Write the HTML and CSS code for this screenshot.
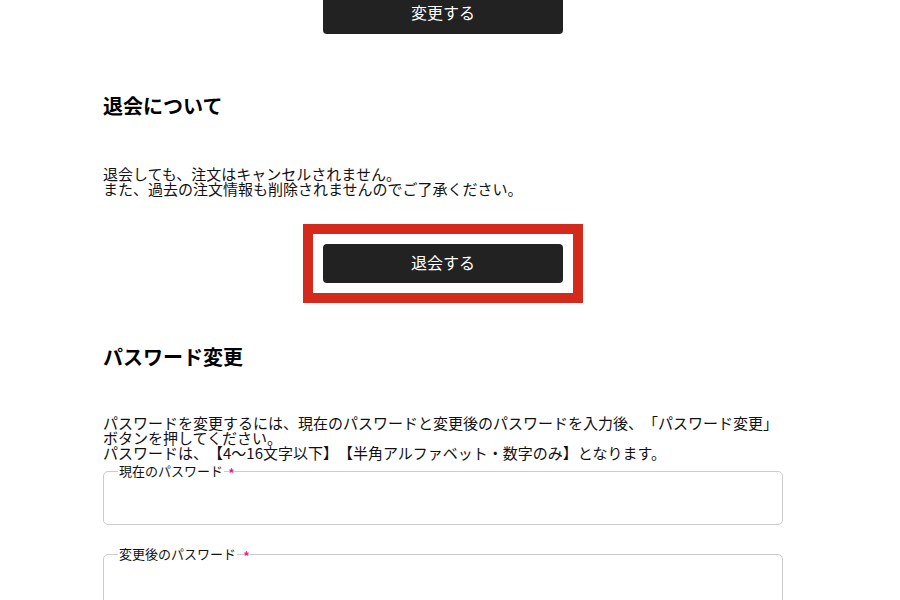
FILE: index.html
```html
<!DOCTYPE html>
<html lang="ja">
<head>
<meta charset="utf-8">
<link rel="stylesheet" href="styles.css">
</head>
<body>
<div class="page">
  <div class="btn-row top-row">
    <button class="btn">変更する</button>
  </div>

  <h2 class="heading withdraw-heading">退会について</h2>
  <p class="text withdraw-text">退会しても、注文はキャンセルされません。<br>また、過去の注文情報も削除されませんのでご了承ください。</p>

  <div class="btn-row">
    <div class="highlight">
      <button class="btn">退会する</button>
    </div>
  </div>

  <h2 class="heading password-heading">パスワード変更</h2>
  <p class="text password-text">パスワードを変更するには、現在のパスワードと変更後のパスワードを入力後、「パスワード変更」ボタンを押してください。<br>パスワードは、【4～16文字以下】【半角アルファベット・数字のみ】となります。</p>

  <fieldset class="field first-field">
    <legend class="field-label">現在のパスワード</legend>
    <span class="req req-1">*</span>
    <input class="field-input" type="password">
  </fieldset>

  <fieldset class="field second-field">
    <legend class="field-label">変更後のパスワード</legend>
    <span class="req req-2">*</span>
    <input class="field-input" type="password">
  </fieldset>
</div>
</body>
</html>
```

FILE: styles.css
```css
html, body {
  margin: 0;
  padding: 0;
  background: #fff;
}
body {
  font-family: "Noto Sans CJK JP", "Noto Sans", sans-serif;
  color: #111;
  overflow: hidden;
  text-spacing-trim: space-all;
}
.page {
  width: 680px;
  margin-left: 103px;
}
.btn-row {
  display: flex;
  justify-content: center;
}
.top-row {
  margin-top: -6px;
}
.btn {
  width: 240px;
  height: 39px;
  border: 0;
  border-radius: 4px;
  background: #222;
  color: #fff;
  font-family: "Noto Sans CJK JP", sans-serif;
  font-size: 16px;
  line-height: 36px;
  padding: 0 0 3px;
}
.top-row .btn {
  height: 40px;
  padding-bottom: 6px;
}
.heading {
  font-size: 20px;
  font-weight: 700;
  line-height: 30px;
  margin: 0;
  color: #000;
}
.withdraw-heading {
  margin-top: 57px;
}
.text {
  font-size: 15px;
  line-height: 15px;
  margin: 0;
  color: #111;
}
.withdraw-text {
  margin-top: 45px;
}
.highlight {
  margin-top: 28px;
  border: 10px solid #d42a1b;
  padding: 10px;
  background: #fff;
}
.password-heading {
  margin-top: 39px;
}
.password-text {
  margin-top: 43px;
}
.field {
  position: relative;
  margin: 0;
  padding: 0 14px;
  border: 1px solid #ccc;
  border-radius: 5px;
  min-width: 0;
}
.first-field {
  margin-top: 3px;
}
.second-field {
  margin-top: 21px;
}
.field-label {
  font-size: 13px;
  line-height: 16px;
  padding: 0 1px;
  color: #111;
}
.req {
  position: absolute;
  top: -13px;
  font-size: 15px;
  line-height: 16px;
  color: #e4147a;
}
.req-1 { left: 124px; }
.req-2 { left: 139px; }
.field-input {
  display: block;
  width: 100%;
  height: 45px;
  border: 0;
  outline: none;
  padding: 0;
  background: transparent;
}
```
